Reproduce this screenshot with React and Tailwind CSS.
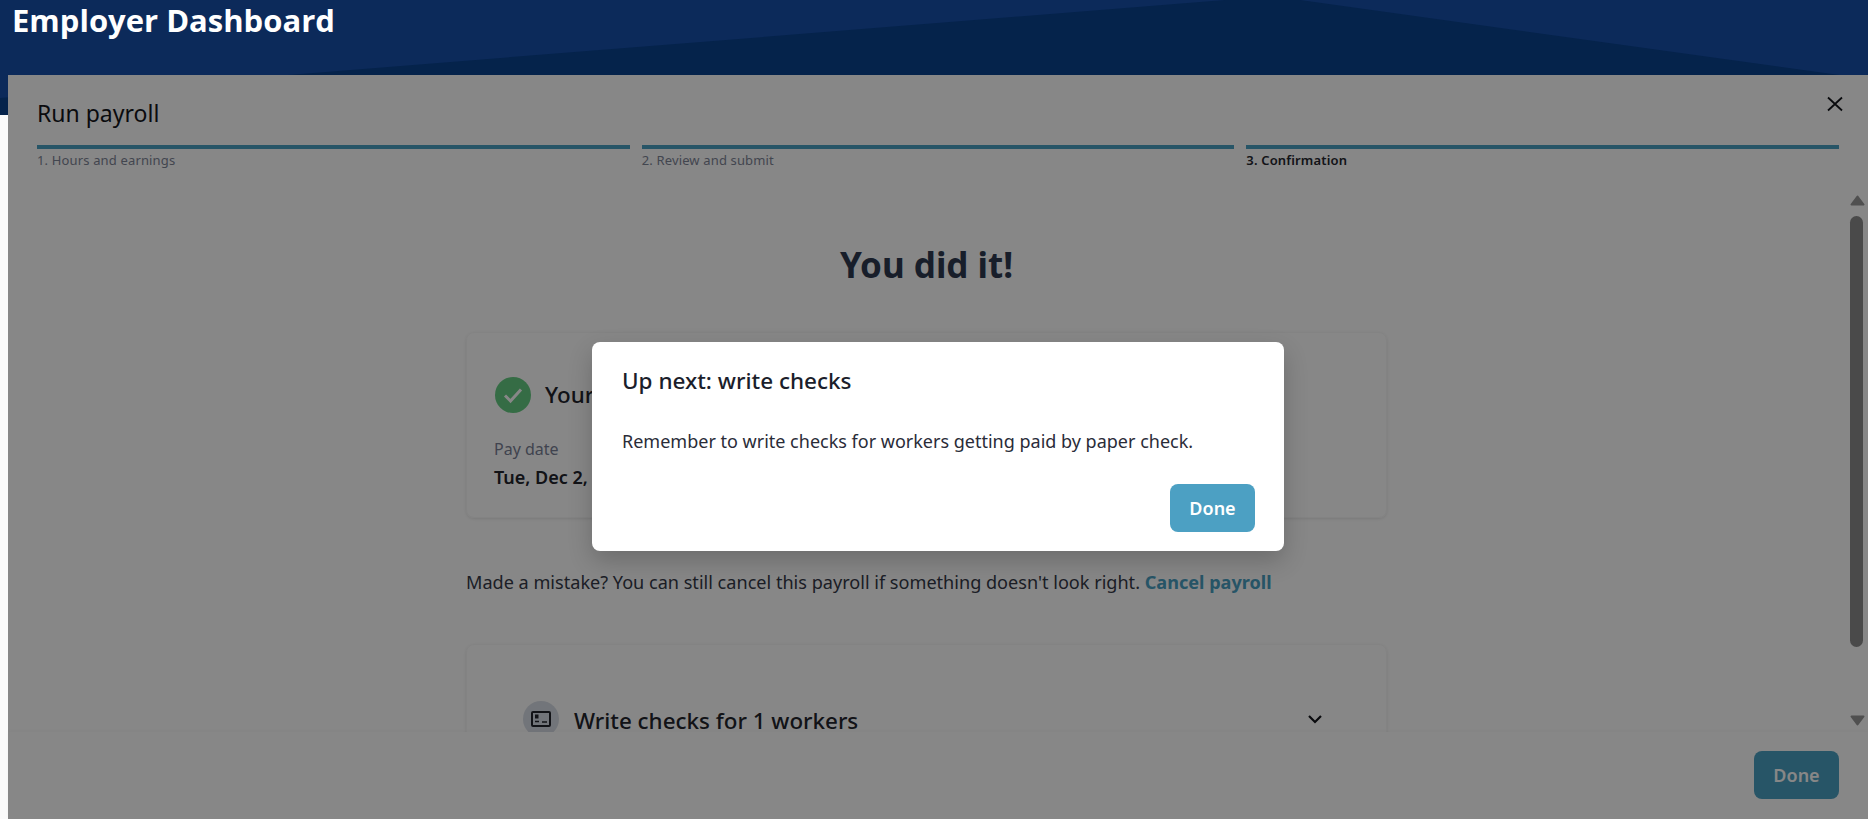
import React from "react";

const sans = "font-['Noto_Sans','Open_Sans',sans-serif]";

function Step({ label, current }) {
  return (
    <div className="flex-1">
      <div className="h-1 bg-[#4ba0c2]" />
      <p className={current ? "mt-[2px] text-[13px] leading-[18px] font-semibold text-[#24262e] tracking-[0.15px]" : "mt-[2px] text-[13px] leading-[18px] text-[#7e8496] tracking-[0.15px]"}>{label}</p>
    </div>
  );
}

function Scrollbar() {
  return (
    <div className="w-[23px] shrink-0 pl-[5px] flex flex-col items-start pt-[26px] pb-[6px]">
      <svg width="15" height="11" viewBox="0 0 15 11"><path d="M7.5 1.5 L13.5 9.5 H1.5 Z" fill="#979797" stroke="#979797" strokeWidth="2" strokeLinejoin="round" /></svg>
      <div className="mt-[10px] w-[13px] h-[431px] rounded-full bg-[#8c8c8c]" />
      <div className="flex-1" />
      <svg width="15" height="11" viewBox="0 0 15 11"><path d="M1.5 1.5 H13.5 L7.5 9.5 Z" fill="#979797" stroke="#979797" strokeWidth="2" strokeLinejoin="round" /></svg>
    </div>
  );
}

export default function App() {
  return (
    <div className={`relative h-[819px] w-[1868px] overflow-hidden bg-[#fafafa] ${sans}`}>
      <header className="relative h-[115px] bg-[#0c2a5a] overflow-hidden">
        <svg className="absolute inset-0" width="1868" height="115" viewBox="0 0 1868 115">
          <polygon points="0,98 1225,0 1300,0 1868,79 1868,115 0,115" fill="#05234b" />
        </svg>
        <h1 className="relative pl-3 text-[31px] leading-[40px] font-bold text-white font-['Open_Sans',sans-serif]">Employer Dashboard</h1>
      </header>

      <section className="absolute left-2 right-0 top-[75px] bottom-0 bg-white flex flex-col">
        <div className="pt-[21px] pl-[29px] pr-[29px]">
          <h2 className="text-[23px] leading-[34px] text-[#14161b]">Run payroll</h2>
          <div className="mt-[15px] flex gap-3">
            <Step label="1. Hours and earnings" />
            <Step label="2. Review and submit" />
            <Step label="3. Confirmation" current />
          </div>
          <svg className="absolute right-[24px] top-[21px]" width="18" height="16" viewBox="0 0 18 16">
            <path d="M2 1.5 L16 14.5 M16 1.5 L2 14.5" stroke="#14161b" strokeWidth="1.8" fill="none" />
          </svg>
        </div>

        <div className="flex-1 min-h-0 flex">
          <div className="flex-1 min-w-0 overflow-hidden">
            <div className="mx-auto w-[921px]">
              <h3 className="mt-[72px] text-center text-[35px] leading-[48px] font-bold text-[#2e3a50]">You did it!</h3>
              <div className="mt-[43px] h-[186px] rounded-lg border border-[#f8f8f8] shadow-[0_1px_3px_rgba(0,0,0,0.1)] pt-[44px] px-7">
                <div className="flex items-center gap-[14px]">
                  <span className="w-9 h-9 rounded-full bg-[#65cc82] flex items-center justify-center">
                    <svg width="22" height="18" viewBox="0 0 22 18"><path d="M3 9.5 L8.5 15 L19 3.5" stroke="#fff" strokeWidth="3" fill="none" /></svg>
                  </span>
                  <span className="text-[22.4px] leading-[30px] font-medium text-[#22242c]">Your payroll was submitted</span>
                </div>
                <p className="mt-[25px] -ml-px text-[16px] leading-[22px] text-[#797f95]">Pay date</p>
                <p className="mt-[5px] -ml-px text-[18px] leading-[24px] font-semibold text-[#22242c]">Tue, Dec 2, 2025</p>
              </div>
              <p className="mt-[51px] text-[18.1px] leading-[26px] text-[#353a48] whitespace-nowrap">
                Made a mistake? You can still cancel this payroll if something doesn't look right.{" "}
                <span className="font-bold text-[#4ba0c2]">Cancel payroll</span>
              </p>
              <div className="mt-[49px] h-[200px] rounded-lg border border-[#f8f8f8] shadow-[0_1px_3px_rgba(0,0,0,0.1)] pt-[56px] pl-[56px] pr-[63px]">
                <div className="flex items-center gap-[15px]">
                  <span className="w-9 h-9 rounded-full bg-[#d8dde6] flex items-center justify-center">
                    <svg width="22" height="18" viewBox="0 0 22 18" fill="none" stroke="#22242c" strokeWidth="2">
                      <rect x="2" y="2" width="18" height="14" rx="1" />
                      <rect x="5.5" y="5" width="2.5" height="3" fill="#22242c" strokeWidth="1" />
                      <path d="M5 11.5 H9 M12 12 H17" strokeWidth="1.6" />
                    </svg>
                  </span>
                  <span className="flex-1 pt-[4px] text-[22.4px] leading-[30px] font-medium text-[#22242c]">Write checks for 1 workers</span>
                  <svg width="16" height="10" viewBox="0 0 16 10" fill="none"><path d="M2 2 L8 8 L14 2" stroke="#14161b" strokeWidth="2.2" /></svg>
                </div>
              </div>
            </div>
          </div>
          <Scrollbar />
        </div>

        <footer className="relative h-[87px] bg-white flex justify-end items-start pt-[19px] pr-[29px] shadow-[0_-1px_4px_rgba(0,0,0,0.03)]">
          <button className="w-[85px] h-12 rounded-lg bg-[#4ba0c2] text-white text-[18px] font-semibold">Done</button>
        </footer>

        <div className="absolute inset-0 bg-black/47 flex items-start justify-center">
          <div className="mt-[267px] w-[692px] h-[209px] rounded-lg bg-white shadow-[0_10px_25px_rgba(0,0,0,0.2)] pt-[22px] pl-[30px] pr-[29px] flex flex-col">
            <h4 className="text-[22.5px] leading-[34px] font-medium text-[#1b1e2b]">Up next: write checks</h4>
            <p className="mt-[30px] text-[18px] leading-[26px] text-[#2a2c38]">Remember to write checks for workers getting paid by paper check.</p>
            <div className="mt-[30px] flex justify-end">
              <button className="w-[85px] h-12 rounded-lg bg-[#4ca0c3] text-white text-[18px] font-semibold">Done</button>
            </div>
          </div>
        </div>
      </section>
    </div>
  );
}
